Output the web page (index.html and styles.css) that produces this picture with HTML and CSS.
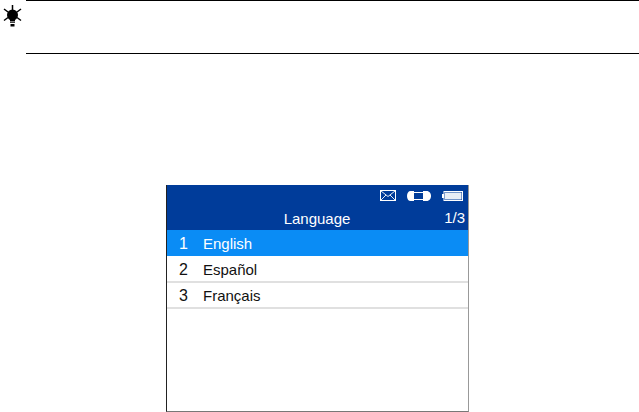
FILE: index.html
```html
<!DOCTYPE html>
<html lang="en">
<head>
<meta charset="utf-8">
<title>Language</title>
<link rel="stylesheet" href="styles.css">
</head>
<body>
<div class="note">
  <svg class="bulb" width="20" height="23" viewBox="0 0 20 23" aria-hidden="true">
    <path d="M9.500 0v5M1 4l4 3M18 4l-4 3M1 15.500l4-3M18 15.500l-4-3" stroke="#000" stroke-width="1.500" fill="none"/>
    <circle cx="9.500" cy="10" r="5.500" fill="#000"/>
    <path d="M7 13h5v3H7zM7 16.500h5v1.300H7zM7.500 19h4v2.500h-4z" fill="#000"/>
  </svg>
  <div class="note-box"></div>
</div>
<div class="screen">
  <header class="head">
    <div class="status">
      <svg width="16" height="11" viewBox="0 0 16 11" aria-hidden="true">
        <rect x=".5" y=".5" width="15" height="10" fill="none" stroke="#fff"/>
        <path d="M1 1l7 5.500L15 1M1 10l5-5M15 10l-5-5" fill="none" stroke="#fff" stroke-width=".9"/>
      </svg>
      <svg width="24" height="12" viewBox="0 0 24 12" aria-hidden="true">
        <path d="M7 1H3.500C1.500 1 0 3 0 6s1.500 5 3.500 5H7z" fill="#fff"/>
        <rect x="6.500" y="2.500" width="10" height="7" fill="none" stroke="#fff"/>
        <path d="M16 1h3.500C22.500 1 24 3.500 24 6s-1.500 5-4.500 5H16z" fill="#fff"/>
      </svg>
      <svg width="21" height="10" viewBox="0 0 21 10" aria-hidden="true">
        <rect x="0" y="3" width="2" height="4" fill="#fff"/>
        <rect x="2" y=".5" width="18.500" height="9" fill="none" stroke="#fff"/>
        <rect x="3" y="1.500" width="16.500" height="7" fill="#e8eef6"/>
      </svg>
    </div>
    <div class="title-row">
      <span class="title">Language</span>
      <span class="page">1/3</span>
    </div>
  </header>
  <ul class="list">
    <li class="item active"><span class="num">1</span><span>English</span></li>
    <li class="item"><span class="num">2</span><span>Español</span></li>
    <li class="item"><span class="num">3</span><span>Français</span></li>
  </ul>
</div>
</body>
</html>
```
FILE: styles.css
```css
html, body {
  margin: 0;
  padding: 0;
  background: #fff;
}
body {
  width: 639px;
  height: 412px;
  overflow: hidden;
  font-family: "Liberation Sans", Arial, sans-serif;
}
.note {
  display: flex;
  align-items: flex-start;
  height: 54px;
}
.bulb {
  margin: 5px 0 0 3px;
  flex: none;
}
.note-box {
  flex: 1;
  height: 52px;
  margin-left: 3px;
  border-top: 1px solid #000;
  border-bottom: 1px solid #000;
}
.screen {
  width: 301px;
  height: 226px;
  margin: 131px 0 0 166px;
  border-left: 1px solid #222;
  border-right: 1px solid #999;
  border-bottom: 1px solid #777;
}
.head {
  height: 45px;
  background: #003c9a;
  color: #fff;
}
.status {
  display: flex;
  justify-content: flex-end;
  align-items: center;
  gap: 11px;
  height: 21px;
  padding-right: 5px;
}
.title-row {
  position: relative;
  height: 24px;
  display: flex;
  justify-content: center;
  align-items: center;
  font-size: 15px;
  padding-top: 1px;
  box-sizing: border-box;
}
.title {
  margin-right: 1px;
}
.page {
  position: absolute;
  right: 3px;
  top: 3px;
}
.list {
  list-style: none;
  margin: 0;
  padding: 0;
}
.item {
  display: flex;
  align-items: baseline;
  height: 24px;
  line-height: 25px;
  padding-left: 12px;
  border-bottom: 2px solid #e0e0e0;
  font-size: 15px;
  color: #111;
}
.item.active {
  height: 26px;
  line-height: 27px;
  margin-bottom: 1px;
  border-bottom: 0;
  background: #0a8cf5;
  color: #fff;
}
.num {
  width: 24px;
  font-size: 16px;
}
```
